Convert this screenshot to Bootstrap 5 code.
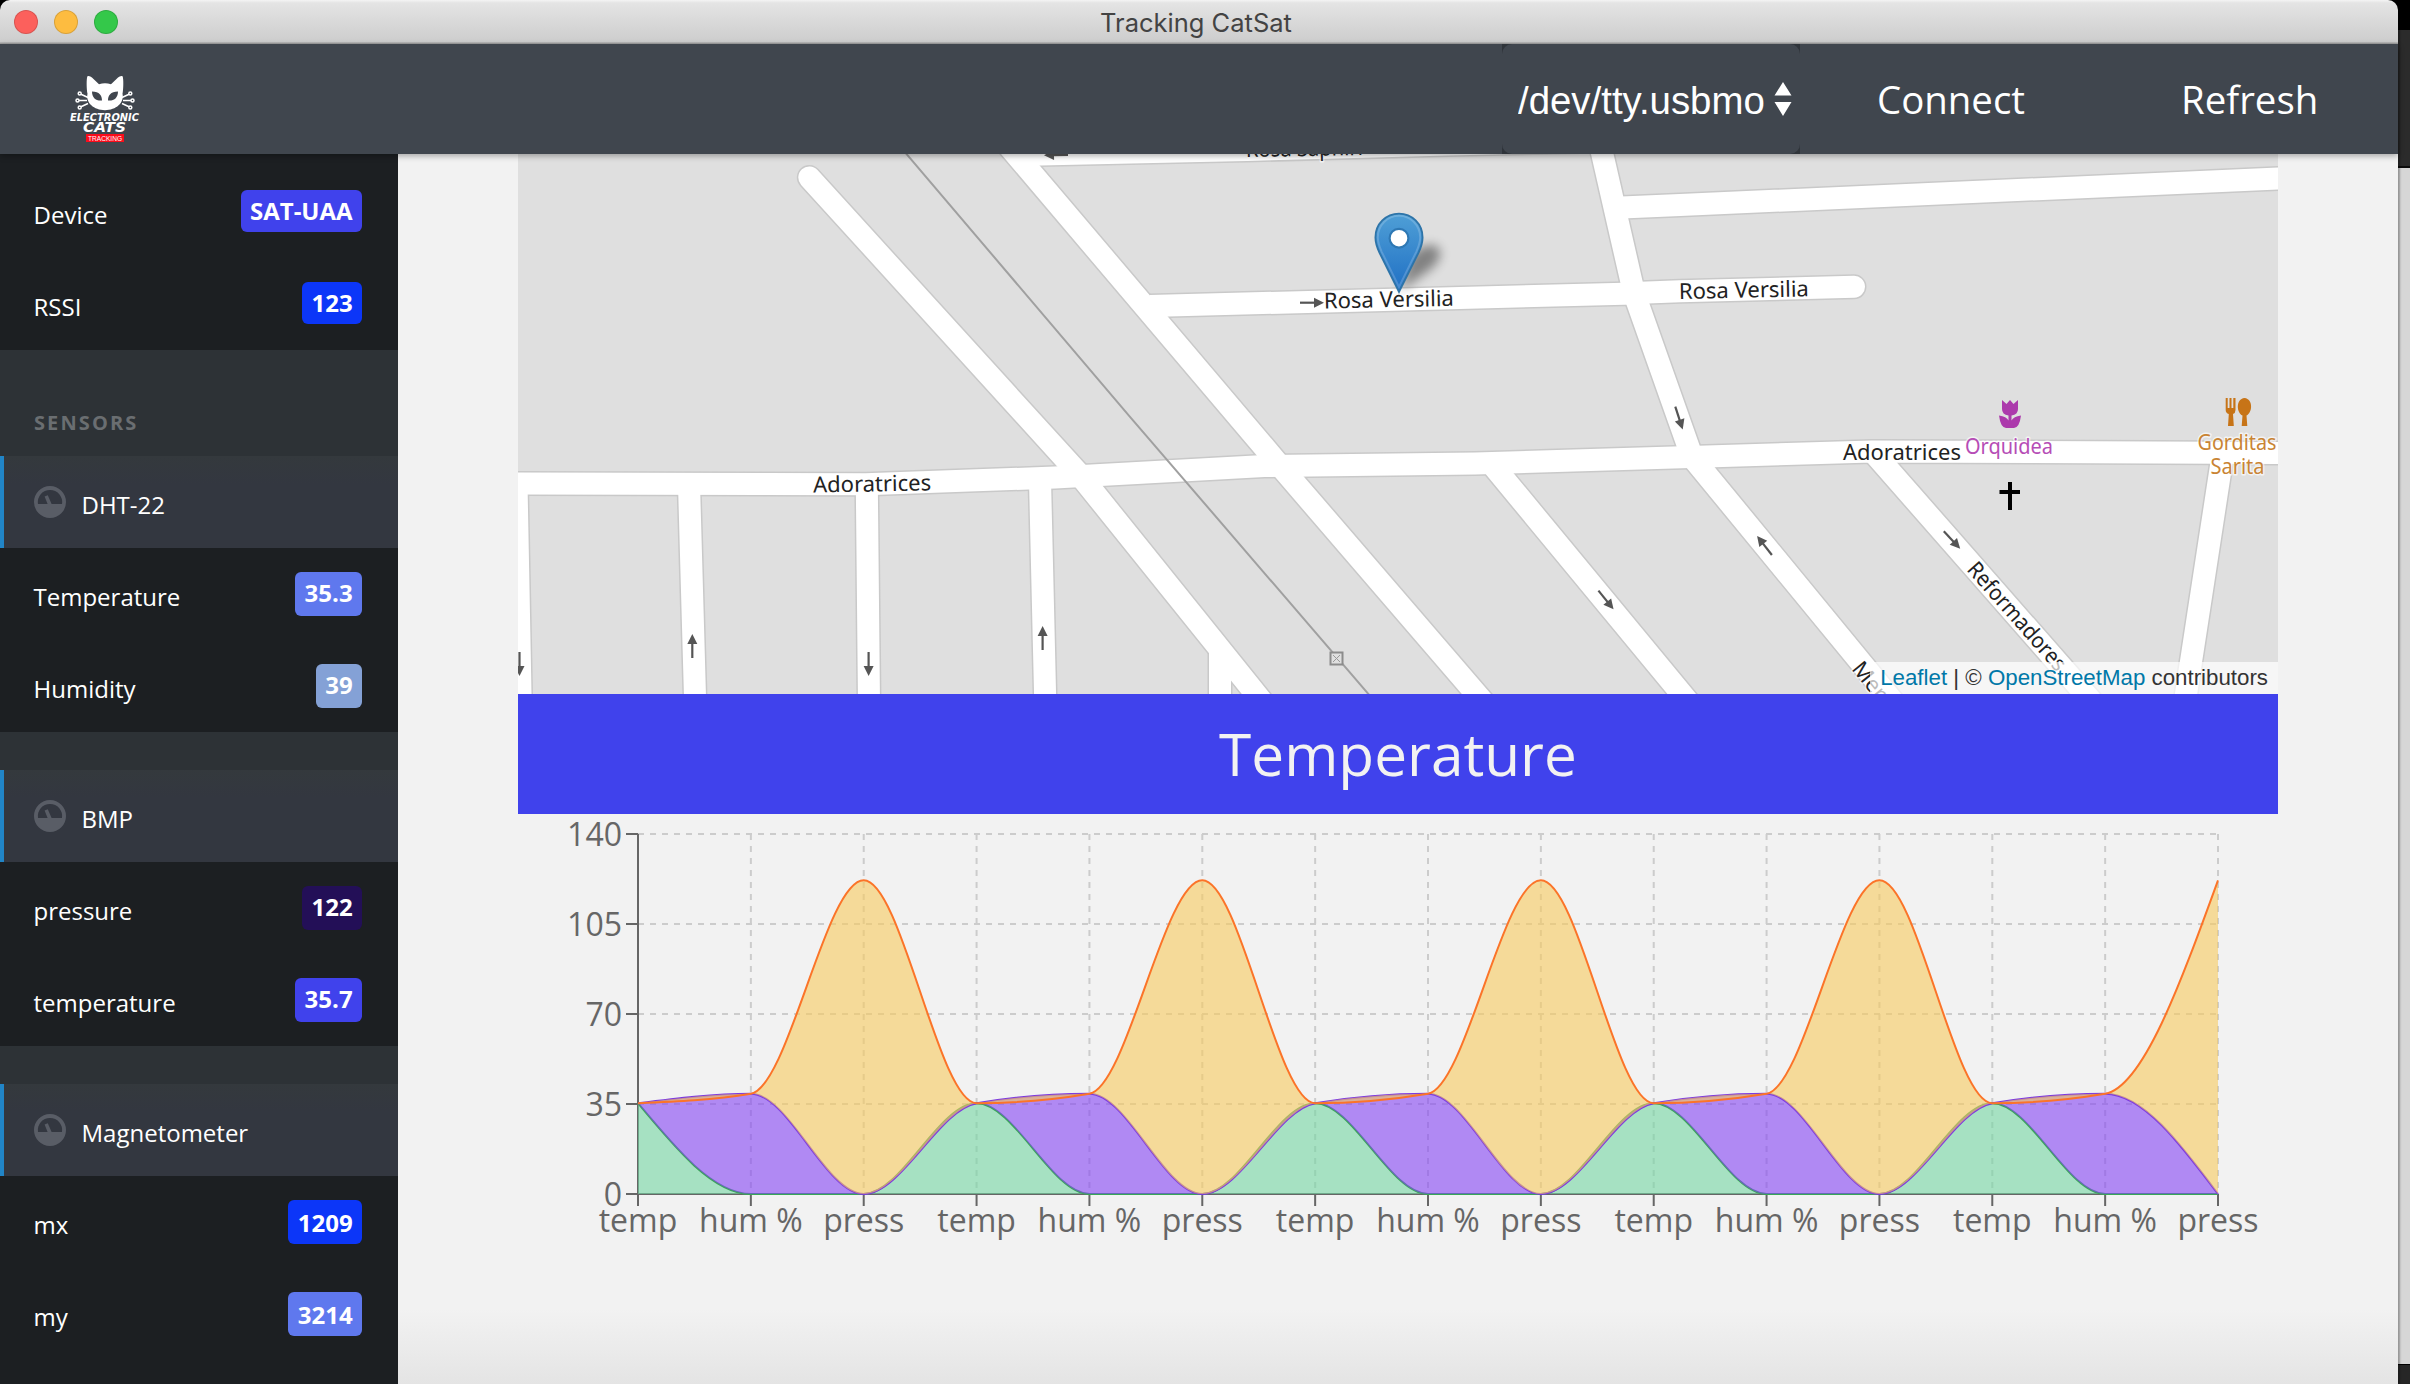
<!DOCTYPE html>
<html lang="en">
<head>
<meta charset="utf-8">
<title>Tracking CatSat</title>
<link href="https://cdn.jsdelivr.net/npm/bootstrap@5.3.0/dist/css/bootstrap.min.css" rel="stylesheet">
<style>
body{font-family:"Open Sans","Noto Sans",sans-serif;background:#d6d6d6;height:1384px;overflow:hidden}
.desk-strip{width:12px;background:linear-gradient(#000 0 30px,#2b2b2b 30px 166px,#0c0c0c 166px 168px,#d6d6d6 168px 1364px,#000 1364px 1365px,#262626 1365px);box-shadow:inset 2px 0 2px rgba(0,0,0,.3)}
.app-shell{width:2398px;height:1384px;background:#000}
.title-bar{height:44px;background:linear-gradient(#f4f4f4 0,#e4e4e4 3px,#cdcdcd 42px,#a0a0a0 43px,#a0a0a0);border-radius:10px 10px 0 0;font:25.5px Inter,sans-serif;color:#434343}
.title-bar .lights{width:150px;padding-left:14px;gap:16px}
.title-bar .lights.pad{width:156px}
.light{width:24px;height:24px;border-radius:50%;border:1px solid rgba(0,0,0,.14)}
.top-nav{height:110px;background:#40464e;color:#fff;font-size:38.4px;box-shadow:0 2px 6px rgba(0,0,0,.32);z-index:2}
.port-wrap{width:298px;background:#2f343a;margin-right:77px}
.port-pick{height:110px;border-radius:10px;background:#40464e;padding:0 8px 0 16px;font-family:"Liberation Sans",sans-serif}
.port-pick .clip{width:248px;overflow:hidden;white-space:nowrap;line-height:60px;padding-top:4px}
.nav-act{color:#fff;line-height:52px;padding:0}
.side{width:398px;background:#1c1f22;color:#fff;font-size:24px}
.gap-bar{height:38px;background:#2d3236}
.gap-bar.tall{height:106px;padding:55px 34px 0;color:#6a6e71;font-size:20px;font-weight:700;letter-spacing:2.1px;line-height:36px}
.side-row{height:92px;padding:0 36px 0 33.5px}
.side-row .lbl{line-height:33px;padding-top:4px}
.side-head{height:92px;background:linear-gradient(#34393d,#333740 30%);border-left:4px solid #2185c7;padding-left:30px}
.side-head svg{margin-right:15.5px}
.side-head .lbl{line-height:33px;padding-top:4px}
.val{font-size:24px;line-height:33px;height:44px;border-radius:6px;padding:4px 9.4px 0;font-weight:700;color:#fff}
.val.short{height:42px;margin-bottom:2px}
.val.low{padding-top:6px}
.main-pane{background:linear-gradient(#f2f2f2 0 1155px,#eaeaea 1200px,#e4e4e4);padding-left:120px}
.map-box{width:1760px;height:540px}
.attrib{right:0;bottom:0;height:32px;padding:0 10px;font:22.3px/32px "Liberation Sans",Arial,sans-serif;background:rgba(255,255,255,.7);color:#333;white-space:nowrap}
.attrib a{color:#0078a8;text-decoration:none}
.banner{width:1760px;height:120px;background:#4042ec;color:#f2f2f2;font-size:58.5px;line-height:80px;padding-bottom:3px}
.map-lbl{font-family:"Noto Sans",sans-serif;font-size:22px;fill:#222;stroke:#fff;stroke-width:3px;stroke-opacity:.65;paint-order:stroke;stroke-linejoin:round}
.axis-lbl{font-size:32px;fill:#666}
svg{display:block;flex:none}
</style>
<script src="https://cdn.jsdelivr.net/npm/bootstrap@5.3.0/dist/js/bootstrap.bundle.min.js"></script>
</head>
<body>
<div class="d-flex">
<div class="app-shell d-flex flex-column">
  <div class="title-bar d-flex align-items-center">
    <div class="lights d-flex"><span class="light" style="background:#fc605c"></span><span class="light" style="background:#fdbc40"></span><span class="light" style="background:#34c84a"></span></div>
    <div class="flex-grow-1 text-center">Tracking CatSat</div>
    <div class="lights pad"></div>
  </div>

  <nav class="top-nav navbar p-0 flex-nowrap align-items-center justify-content-start position-relative">
    <svg width="160" height="110" viewBox="0 44 160 110">
      <path fill="#fff" d="M87.500 76.300c1-1 4 .6 6 2.600l5.500 5.300q6-1.900 12 0l5.500-5.300c2-2 5-3.600 6-2.600 1.200 1.200 1 13.500 0 17.500 2 9-6.500 16.400-17.500 16.400s-19.500-7.400-17.500-16.400c-1-4-1.200-16.300 0-17.500z"/>
      <path d="M92 91.500c7.500 0 10 4 10 9-6.500 .5-10-3-10-9zM118 91.500c-7.500 0-10 4-10 9 6.500 .5 10-3 10-9z" fill="#40464e"/>
      <g fill="none" stroke="#fff" stroke-width="1.500">
        <path d="M88 97.500l-7-3.300M87 100.500h-8M88 103.500l-7 3.300M122 97.500l7-3.300M123 100.500h8M122 103.500l7 3.300"/>
        <circle cx="79.700" cy="93.500" r="1.500"/><circle cx="77.500" cy="100.500" r="1.500"/><circle cx="79.700" cy="107.500" r="1.500"/>
        <circle cx="130.300" cy="93.500" r="1.500"/><circle cx="132.500" cy="100.500" r="1.500"/><circle cx="130.300" cy="107.500" r="1.500"/>
      </g>
      <g fill="#fff" font-family="DejaVu Sans, sans-serif" font-weight="700" font-style="italic">
        <text x="70" y="120.700" font-size="10.500" textLength="69" lengthAdjust="spacingAndGlyphs">ELECTRONIC</text>
        <text x="83" y="132" font-size="14" textLength="43" lengthAdjust="spacingAndGlyphs">CATS</text>
      </g>
      <rect x="86" y="134" width="38" height="8" fill="#fb0d1b"/>
      <text x="88" y="140.600" font-size="7" fill="#fff" font-family="Liberation Sans, sans-serif" textLength="34" lengthAdjust="spacingAndGlyphs">TRACKING</text>
    </svg>
    <div class="port-wrap ms-auto">
      <div class="port-pick d-flex align-items-center justify-content-between">
        <span class="clip">/dev/tty.usbmo</span>
        <svg width="18" height="34" viewBox="0 0 18 34"><path d="M9 0l8.500 13.500H.5zM9 34l8.500-14H.5z" fill="#fff"/></svg>
      </div>
    </div>
    <a class="nav-act text-decoration-none" style="width:304px" href="#">Connect</a>
    <a class="nav-act text-decoration-none" style="width:217px" href="#">Refresh</a>
  </nav>

  <div class="d-flex flex-grow-1 overflow-hidden">
    <aside class="side flex-shrink-0">
      <div style="height:12px"></div>
      <div class="side-row d-flex justify-content-between align-items-center"><span class="lbl">Device</span><span class="val short" style="background:#4042ec">SAT-UAA</span></div>
      <div class="side-row d-flex justify-content-between align-items-center"><span class="lbl">RSSI</span><span class="val short" style="background:#0c36f8">123</span></div>
      <div class="gap-bar tall">SENSORS</div>
      <div class="side-head d-flex align-items-center"><svg width="32" height="32"><use href="#gauge"/></svg><span class="lbl">DHT-22</span></div>
      <div class="side-row d-flex justify-content-between align-items-center"><span class="lbl">Temperature</span><span class="val" style="background:#5f78ee">35.3</span></div>
      <div class="side-row d-flex justify-content-between align-items-center"><span class="lbl">Humidity</span><span class="val" style="background:#84a1d6">39</span></div>
      <div class="gap-bar"></div>
      <div class="side-head d-flex align-items-center"><svg width="32" height="32"><use href="#gauge"/></svg><span class="lbl">BMP</span></div>
      <div class="side-row d-flex justify-content-between align-items-center"><span class="lbl">pressure</span><span class="val" style="background:#230f57">122</span></div>
      <div class="side-row d-flex justify-content-between align-items-center"><span class="lbl">temperature</span><span class="val" style="background:#4042ec">35.7</span></div>
      <div class="gap-bar"></div>
      <div class="side-head d-flex align-items-center"><svg width="32" height="32"><use href="#gauge"/></svg><span class="lbl">Magnetometer</span></div>
      <div class="side-row d-flex justify-content-between align-items-center"><span class="lbl">mx</span><span class="val low" style="background:#0c36f8">1209</span></div>
      <div class="side-row d-flex justify-content-between align-items-center"><span class="lbl">my</span><span class="val low" style="background:#5f78ee">3214</span></div>
    </aside>

    <main class="main-pane flex-grow-1">
      <div class="map-box position-relative">
        <svg width="1760" height="540" viewBox="518 154 1760 540">
          <defs>
            <symbol id="gauge" viewBox="0 0 32 32"><path fill="#595d66" fill-rule="evenodd" d="M16 0a16 16 0 1 0 0 32 16 16 0 0 0 0-32zm0 4a12 12 0 0 1 12 14H17.600L13.800 9.200 10.600 10.500 13.600 18H4A12 12 0 0 1 16 4z"/></symbol>
            <g id="arrow"><path d="M-12 0H4" stroke="#555" stroke-width="2.200"/><path d="M12 0L2-5V5z" fill="#555"/></g>
            <g id="roads" fill="none">
              <path d="M809.300 177.500L1079 474 1264 704" stroke-linecap="round"/>
              <path d="M510 483.500L866 484.300 1055 477.500 1264 466 1475 463.500 1690 457 1872 451.500 2290 453"/>
              <path d="M516.500 484L520.700 704M689 484L695.200 704M866.800 484L869 704M1040 480L1045.300 704M1220 650V704"/>
              <path d="M1007 144L1275 460 1485 704"/>
              <path d="M1018 155L1130 152.500 1247 150 1448 144.500 1602 141"/>
              <path d="M1150 306L1634 293.500"/><path d="M1634 293L1680 291.300 1854 286.800" stroke-linecap="round"/>
              <path d="M1600 144L1634 293 1692 457 1895 704"/>
              <path d="M1616 207.700L1680 205 2290 178"/>
              <path d="M1490 462L1690 704M1873 452L2094 704M2223 453L2184.500 704"/>
            </g>
            <linearGradient id="pin" x2="0" y2="1"><stop offset="0" stop-color="#4f9fd6"/><stop offset="1" stop-color="#1f6fc4"/></linearGradient>
            <filter id="soft" x="-50%" y="-50%" width="200%" height="200%"><feGaussianBlur stdDeviation="5.500"/></filter>
          </defs>
          <rect x="518" y="154" width="1760" height="540" fill="#dfdfdf"/>
          <use href="#roads" stroke="#c9c9c9" stroke-width="25"/>
          <use href="#roads" stroke="#fff" stroke-width="22"/>
          <path d="M898 144L1130 416.800 1377 704" fill="none" stroke="#a0a0a0" stroke-width="2"/>
          <rect x="1330.500" y="652.500" width="12" height="12" fill="#dfdfdf" stroke="#8c8c8c" stroke-width="2"/>
          <path d="M1333 655l7 7M1340 655l-7 7" stroke="#999" stroke-width="1"/>

          <use href="#arrow" transform="translate(519.500 664) rotate(90)"/>
          <use href="#arrow" transform="translate(692.300 646) rotate(-90)"/>
          <use href="#arrow" transform="translate(868.600 664) rotate(90)"/>
          <use href="#arrow" transform="translate(1042.600 638) rotate(-90)"/>
          <use href="#arrow" transform="translate(1056 155) rotate(179)"/>
          <use href="#arrow" transform="translate(1312 302.700)"/>
          <use href="#arrow" transform="translate(1679 418) rotate(72)"/>
          <use href="#arrow" transform="translate(1606 600) rotate(51)"/>
          <use href="#arrow" transform="translate(1764.500 545.500) rotate(-128)"/>
          <use href="#arrow" transform="translate(1952 540) rotate(47)"/>

          <g class="map-lbl">
            <text x="1246" y="157" transform="rotate(-1 1247 157)" textLength="117" lengthAdjust="spacingAndGlyphs">Rosa Saphiri</text>
            <text x="813.300" y="492.500" transform="rotate(-1 813 493)" textLength="118" lengthAdjust="spacingAndGlyphs">Adoratrices</text>
            <text x="1324" y="308.500" transform="rotate(-1.200 1325 309)" textLength="130" lengthAdjust="spacingAndGlyphs">Rosa Versilia</text>
            <text x="1679" y="299" transform="rotate(-1.200 1680 299)" textLength="130" lengthAdjust="spacingAndGlyphs">Rosa Versilia</text>
            <text x="1843" y="460.300" textLength="118" lengthAdjust="spacingAndGlyphs">Adoratrices</text>
            <text x="0" y="0" transform="translate(1966 570) rotate(48.500)" textLength="137" lengthAdjust="spacingAndGlyphs">Reformadores</text>
            <text x="0" y="0" transform="translate(1851 669) rotate(51)">Mer</text>
            <text x="1965" y="454.300" style="fill:#b64db6" textLength="88" lengthAdjust="spacingAndGlyphs">Orquidea</text>
            <text x="2197.500" y="450" style="fill:#c98434" textLength="79" lengthAdjust="spacingAndGlyphs">Gorditas</text>
            <text x="2210.500" y="474" style="fill:#c98434" textLength="54" lengthAdjust="spacingAndGlyphs">Sarita</text>
          </g>
          <path fill="#ac39ac" d="M2002 400l4.500 4 3.500-4 3.500 4 4.500-4v9q0 5.500-6.500 6.500v5q2-4 9.500-5-1.500 12-7 12.500h-8q-5.500-.5-7-12.500 7.500 1 9.500 5v-5q-6.500-1-6.500-6.500z"/>
          <path fill="#c77417" d="M2225.700 398h2v10h1.800v-10h2v10h1.800v-10h2.200v12q0 3-2.500 4l.8 12h-5.800l.8-12q-3.100-1-3.100-4zM2244.500 398c9 1 8 15 2 17.500l.8 10.500h-5.600l.8-10.500c-6-2.500-7-16.500 2-17.500z"/>
          <path d="M2010 482v28M1999.500 492h20.500" stroke="#000" stroke-width="4"/>

          <path d="M1400 291L1410 256Q1424 242 1436 246 1446 254 1432 268z" fill="#000" opacity=".42" filter="url(#soft)"/>
          <g transform="translate(1374 212) scale(2)">
            <path d="M12.500 .8C6 .8 .7 6 .7 12.700c0 2.800 1 5.400 2 7.600L12.500 40l9.800-19.700c1-2.200 2-4.800 2-7.600C24.300 6 19 .8 12.500 .8z" fill="url(#pin)" stroke="#2e74a8" stroke-width=".9"/>
            <path d="M12.500 1.900C6.700 1.900 1.900 6.600 1.900 12.700c0 2.600 1 5 1.900 7.100L12.500 37.500l8.700-17.700c.9-2.100 1.900-4.500 1.900-7.100 0-6.100-4.800-10.800-10.600-10.800z" fill="none" stroke="#fff" stroke-opacity=".18" stroke-width="1"/>
            <circle cx="12.500" cy="13.100" r="4.700" fill="#fff" stroke="#2e78b4" stroke-width="1.100"/>
          </g>
        </svg>
        <div class="attrib position-absolute"><a href="#">Leaflet</a> | © <a href="#">OpenStreetMap</a> contributors</div>
      </div>
      <div class="banner d-flex align-items-center justify-content-center">Temperature</div>
      <svg id="chart" width="1760" height="460" viewBox="518 814 1760 460"></svg>
    </main>
  </div>
</div>
<div class="desk-strip"></div>
</div>

<script>
const X0 = 638, X1 = 2218, Y0 = 1194, H = 360, MAX = 140, N = 15;
const names = ['temp', 'hum %', 'press'];
const px = i => X0 + (X1 - X0) * i / (N - 1), py = v => Y0 - v * H / MAX;
const stacks = [[35.3, 0, 0], [35.3, 39, 0], [35.3, 39, 122]];
const paint = [['#3aa757', '#73d6a2'], ['#7c3ae0', '#8443f4'], ['#fb7429', '#f7c95d']];

// Monotone cubic interpolation, returned as bezier segments
function segments(vals) {
  const p = vals.map((v, i) => [px(i), py(v)]), h = px(1) - px(0), d = [], m = [];
  for (let i = 0; i < N - 1; i++) d[i] = (p[i + 1][1] - p[i][1]) / h;
  for (let i = 1; i < N - 1; i++)
    m[i] = (Math.sign(d[i - 1]) + Math.sign(d[i])) * Math.min(Math.abs(d[i - 1]), Math.abs(d[i]), Math.abs(d[i - 1] + d[i]) / 4) || 0;
  m[0] = (3 * d[0] - m[1]) / 2;
  m[N - 1] = (3 * d[N - 2] - m[N - 2]) / 2;
  return { p, m, h };
}
function forward({ p, m, h }) {
  let s = p[0].join();
  for (let i = 1; i < N; i++) s += `C${p[i-1][0] + h/3},${p[i-1][1] + m[i-1]*h/3} ${p[i][0] - h/3},${p[i][1] - m[i]*h/3} ${p[i]}`;
  return s;
}
function backward({ p, m, h }) {
  let s = p[N - 1].join();
  for (let i = N - 1; i > 0; i--) s += `C${p[i][0] - h/3},${p[i][1] - m[i]*h/3} ${p[i-1][0] + h/3},${p[i-1][1] + m[i-1]*h/3} ${p[i-1]}`;
  return s;
}
let out = '<g stroke="#ccc" stroke-width="2" stroke-dasharray="6 6">';
for (let v = 0; v <= 140; v += 35) out += `<path d="M${X0} ${py(v)}H${X1}"/>`;
for (let i = 0; i < N; i++) out += `<path d="M${px(i)} ${Y0 - H}V${Y0}"/>`;
out += `</g><g stroke="#666" stroke-width="2"><path d="M${X0} ${Y0 - H}V${Y0}M${X0} ${Y0}H${X1}"/>`;
for (let v = 0; v <= 140; v += 35) out += `<path d="M${X0 - 12} ${py(v)}h12"/>`;
for (let i = 0; i < N; i++) out += `<path d="M${px(i)} ${Y0}v12"/>`;
out += '</g><g class="axis-lbl">';
for (let v = 0; v <= 140; v += 35) out += `<text x="622" y="${py(v) + 11.5}" text-anchor="end">${v}</text>`;
for (let i = 0; i < N; i++) out += `<text x="${px(i)}" y="1232" text-anchor="middle">${names[i % 3]}</text>`;
out += '</g>';
let base = segments(Array(N).fill(0));
stacks.forEach((s, k) => {
  const top = segments(Array.from({ length: N }, (_, i) => s[i % 3]));
  out += `<path d="M${forward(top)}L${backward(base)}Z" fill="${paint[k][1]}" fill-opacity=".6"/><path d="M${forward(top)}" fill="none" stroke="${paint[k][0]}" stroke-width="2"/>`;
  base = top;
});
document.getElementById('chart').innerHTML = out;
</script>
</body>
</html>
